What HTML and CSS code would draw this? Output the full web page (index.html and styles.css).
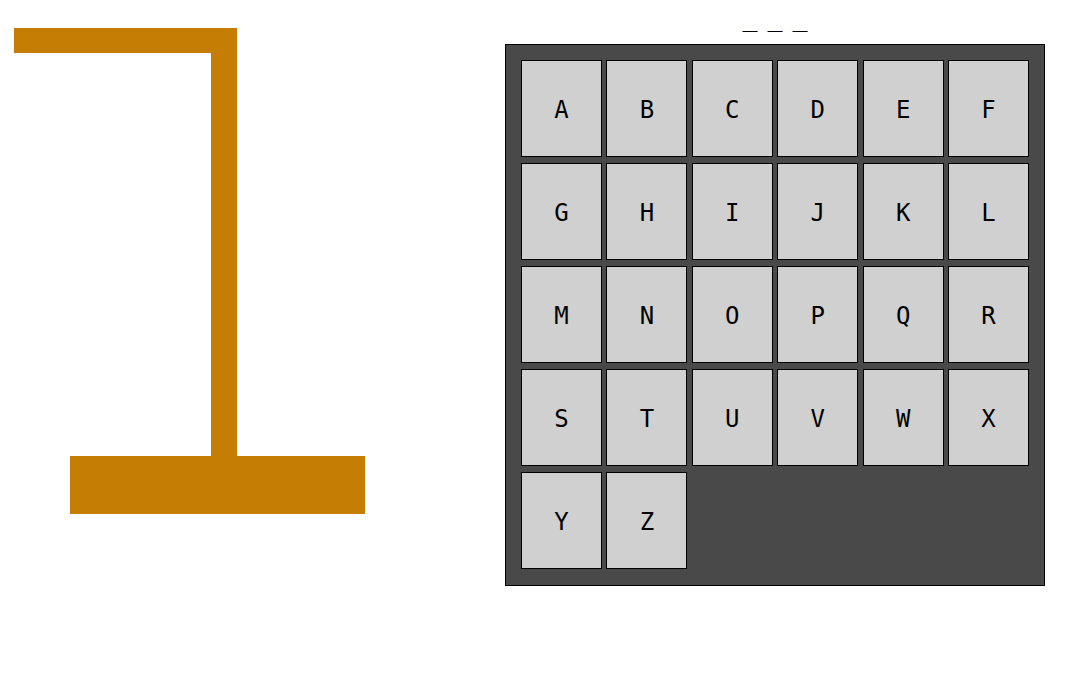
FILE: index.html
```html
<!DOCTYPE html>
<html lang="en">
<head>
<meta charset="utf-8">
<title>Hangman</title>
<link rel="stylesheet" href="styles.css">
</head>
<body>
<main class="app">
  <svg class="gallows" width="380" height="520" viewBox="0 0 380 520" aria-hidden="true">
    <rect x="14" y="28" width="223" height="25" fill="#c57d03"/>
    <rect x="211" y="28" width="26" height="428" fill="#c57d03"/>
    <rect x="70" y="456" width="295" height="58" fill="#c57d03"/>
  </svg>
  <section class="game">
    <div class="word">
      <span class="slot">_</span>
      <span class="slot">_</span>
      <span class="slot">_</span>
    </div>
    <div class="keyboard">
      <button class="key">A</button>
      <button class="key">B</button>
      <button class="key">C</button>
      <button class="key">D</button>
      <button class="key">E</button>
      <button class="key">F</button>
      <button class="key">G</button>
      <button class="key">H</button>
      <button class="key">I</button>
      <button class="key">J</button>
      <button class="key">K</button>
      <button class="key">L</button>
      <button class="key">M</button>
      <button class="key">N</button>
      <button class="key">O</button>
      <button class="key">P</button>
      <button class="key">Q</button>
      <button class="key">R</button>
      <button class="key">S</button>
      <button class="key">T</button>
      <button class="key">U</button>
      <button class="key">V</button>
      <button class="key">W</button>
      <button class="key">X</button>
      <button class="key">Y</button>
      <button class="key">Z</button>
    </div>
  </section>
</main>
</body>
</html>
```

FILE: styles.css
```css
html, body {
  margin: 0;
  padding: 0;
  background: #ffffff;
}

body {
  font-family: "DejaVu Sans Mono", "Liberation Mono", monospace;
  color: #000000;
}

.app {
  display: flex;
  align-items: flex-start;
}

.gallows {
  display: block;
  flex: 0 0 auto;
}

.game {
  margin-left: 125px;
  display: flex;
  flex-direction: column;
  align-items: center;
  width: 540px;
}

.word {
  height: 44px;
  display: flex;
  gap: 10px;
  align-items: flex-start;
}

.slot {
  font-size: 25px;
  line-height: 25px;
  display: block;
  padding-top: 5px;
}

.keyboard {
  box-sizing: border-box;
  width: 540px;
  height: 542px;
  background: #494949;
  border: 1px solid #000000;
  padding: 15px;
  display: grid;
  grid-template-columns: repeat(6, 1fr);
  grid-auto-rows: 97px;
  column-gap: 4.5px;
  row-gap: 6px;
  align-content: start;
}

.key {
  box-sizing: border-box;
  margin: 0;
  padding: 2px 0 0 0;
  background: #d0d0d0;
  border: 1px solid #000000;
  border-radius: 0;
  font-family: "DejaVu Sans Mono", "Liberation Mono", monospace;
  font-size: 24px;
  color: #000000;
  display: flex;
  align-items: center;
  justify-content: center;
}
```
